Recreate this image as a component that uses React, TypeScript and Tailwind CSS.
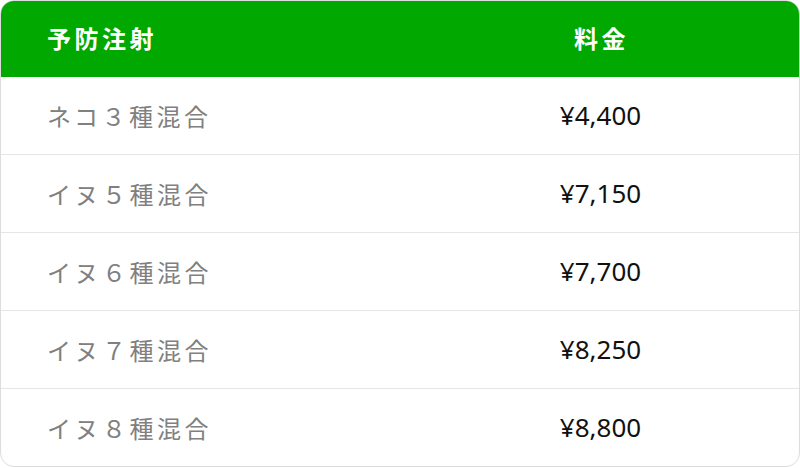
import React from "react";

const rows = [
  ["ネコ３種混合", "¥4,400"],
  ["イヌ５種混合", "¥7,150"],
  ["イヌ６種混合", "¥7,700"],
  ["イヌ７種混合", "¥8,250"],
  ["イヌ８種混合", "¥8,800"],
];

export default function App() {
  return (
    <div
      className="w-[800px] h-[468px] bg-white"
      style={{ fontFamily: '"Noto Sans CJK JP", "Noto Sans", sans-serif' }}
    >
      <div className="w-[800px] h-[467px] border border-[#dddddd] rounded-[14px] overflow-hidden flex flex-col">
        <div className="h-[76px] bg-[#00a800] grid grid-cols-2 items-center text-white font-bold text-[24px] tracking-[3.5px] pb-[2px]">
          <div className="pl-[46px]">予防注射</div>
          <div className="text-center pl-[4px]">料金</div>
        </div>
        {rows.map(([name, price], i) => (
          <div
            key={i}
            className={`flex-1 grid grid-cols-2 items-center ${i > 0 ? "border-t border-[#e6e6e6]" : ""}`}
          >
            <div className="pl-[46px] text-[24px] text-[#808080] tracking-[3.5px]">{name}</div>
            <div
              className="text-center text-[26px] text-[#111111] pl-[2px]"
              style={{ fontFamily: '"Noto Sans", sans-serif' }}
            >
              {price}
            </div>
          </div>
        ))}
      </div>
    </div>
  );
}
